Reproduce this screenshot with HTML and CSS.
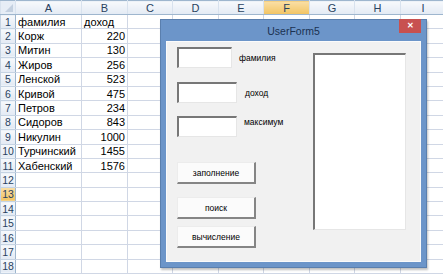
FILE: index.html
```
<!DOCTYPE html>
<html lang="ru">
<head>
	<meta charset="UTF-8">
	<title>UserForm5</title>
	<link rel="stylesheet" href="styles.css">
</head>
<body>
	<table class="sheet">
		<colgroup>
			<col class="c-head"><col class="c-a"><col class="c-wide"><col class="c-narrow"><col class="c-wide"><col class="c-narrow"><col class="c-wide"><col class="c-narrow"><col class="c-wide"><col class="c-narrow">
		</colgroup>
		<thead>
			<tr><th class="corner"></th><th>A</th><th>B</th><th>C</th><th>D</th><th>E</th><th class="cur">F</th><th>G</th><th>H</th><th>I</th></tr>
		</thead>
		<tbody>
			<tr><th>1</th><td>фамилия</td><td>доход</td><td></td><td></td><td></td><td></td><td></td><td></td><td></td></tr>
			<tr><th>2</th><td>Корж</td><td class="num">220</td><td></td><td></td><td></td><td></td><td></td><td></td><td></td></tr>
			<tr><th>3</th><td>Митин</td><td class="num">130</td><td></td><td></td><td></td><td></td><td></td><td></td><td></td></tr>
			<tr><th>4</th><td>Жиров</td><td class="num">256</td><td></td><td></td><td></td><td></td><td></td><td></td><td></td></tr>
			<tr><th>5</th><td>Ленской</td><td class="num">523</td><td></td><td></td><td></td><td></td><td></td><td></td><td></td></tr>
			<tr><th>6</th><td>Кривой</td><td class="num">475</td><td></td><td></td><td></td><td></td><td></td><td></td><td></td></tr>
			<tr><th>7</th><td>Петров</td><td class="num">234</td><td></td><td></td><td></td><td></td><td></td><td></td><td></td></tr>
			<tr><th>8</th><td>Сидоров</td><td class="num">843</td><td></td><td></td><td></td><td></td><td></td><td></td><td></td></tr>
			<tr><th>9</th><td>Никулин</td><td class="num">1000</td><td></td><td></td><td></td><td></td><td></td><td></td><td></td></tr>
			<tr><th>10</th><td>Турчинский</td><td class="num">1455</td><td></td><td></td><td></td><td></td><td></td><td></td><td></td></tr>
			<tr><th>11</th><td>Хабенский</td><td class="num">1576</td><td></td><td></td><td></td><td></td><td></td><td></td><td></td></tr>
			<tr><th>12</th><td></td><td></td><td></td><td></td><td></td><td></td><td></td><td></td><td></td></tr>
			<tr><th class="cur">13</th><td></td><td></td><td></td><td></td><td></td><td></td><td></td><td></td><td></td></tr>
			<tr><th>14</th><td></td><td></td><td></td><td></td><td></td><td></td><td></td><td></td><td></td></tr>
			<tr><th>15</th><td></td><td></td><td></td><td></td><td></td><td></td><td></td><td></td><td></td></tr>
			<tr><th>16</th><td></td><td></td><td></td><td></td><td></td><td></td><td></td><td></td><td></td></tr>
			<tr><th>17</th><td></td><td></td><td></td><td></td><td></td><td></td><td></td><td></td><td></td></tr>
			<tr><th>18</th><td></td><td></td><td></td><td></td><td></td><td></td><td></td><td></td><td></td></tr>
		</tbody>
	</table>

	<div class="form">
		<div class="title">
			UserForm5
			<a href="javascript:;" class="close">&#x2715;</a>
		</div>
		<div class="client">
			<div class="fields">
				<div class="field f1">
					<div class="textbox"></div>
					<span class="label">фамилия</span>
				</div>
				<div class="field f2">
					<div class="textbox"></div>
					<span class="label">доход</span>
				</div>
				<div class="field f3">
					<div class="textbox"></div>
					<span class="label">максимум</span>
				</div>
				<a href="javascript:;" class="btn b1">заполнение</a>
				<a href="javascript:;" class="btn b2">поиск</a>
				<a href="javascript:;" class="btn b3">вычисление</a>
			</div>
			<div class="listbox"></div>
		</div>
	</div>
</body>
</html>
```

FILE: styles.css
```
*{
	margin: 0;
	padding: 0;
}
body{
	width: 443px;
	height: 276px;
	overflow: hidden;
	position: relative;
	background: #fff;
	font-family: "Liberation Sans", Arial, sans-serif;
}
.sheet{
	border-collapse: collapse;
	table-layout: fixed;
	width: 445px;
}
.sheet .c-head{ width: 15px; }
.sheet .c-a{ width: 66px; }
.sheet .c-wide{ width: 46px; }
.sheet .c-narrow{ width: 45px; }
.sheet tr{
	height: 14.4px;
}
.sheet thead tr{
	height: 14px;
}
.sheet td,
.sheet th{
	border: 1px solid #d0d7e5;
	font-size: 11px;
	font-weight: normal;
	line-height: 12px;
	padding: 0 2px;
	white-space: nowrap;
	overflow: hidden;
	text-align: left;
	color: #000;
}
.sheet th{
	background: linear-gradient(#f7f9fc, #e3eaf4);
	border-color: #c5d3e3;
	color: #29425f;
	text-align: center;
	padding: 0;
}
.sheet thead th{
	border-color: #9eb6ce #d8e2ee #9eb6ce #d8e2ee;
}
.sheet tbody th{
	border-right-color: #9eb6ce;
	font-size: 10.5px;
}
.sheet th.cur{
	background: linear-gradient(#fadfa6, #f2c462);
	color: #29425f;
}
.sheet th.corner{
	position: relative;
	background: #e6edf6;
}
.sheet th.corner:after{
	content: "";
	position: absolute;
	right: 2px;
	bottom: 2px;
	border-left: 8px solid transparent;
	border-bottom: 8px solid #c3d0e0;
}
.sheet td.num{
	text-align: right;
}

/* окно формы */
.form{
	position: absolute;
	left: 160px;
	top: 19px;
	width: 267px;
	height: 249px;
	box-sizing: border-box;
	padding: 0 5px 5px;
	background: #6c95c9;
	border: 1px solid #5a7fae;
	box-shadow: 1px 2px 2px rgba(0,0,0,0.25);
}
.form .title{
	position: relative;
	height: 21px;
	line-height: 22px;
	text-align: center;
	font-size: 10.5px;
	color: #1b3251;
}
.form .close{
	position: absolute;
	right: 0;
	top: -1px;
	width: 22px;
	height: 14px;
	line-height: 14px;
	background: #c85150;
	color: #fff;
	font-size: 8px;
	font-weight: bold;
	text-decoration: none;
	text-align: center;
}
.client{
	display: flex;
	height: 221px;
	background: #f1f1f1;
	border: 1px solid #fbfbfb;
	box-sizing: border-box;
}
.fields{
	display: flex;
	flex-direction: column;
	align-items: flex-start;
	width: 136px;
	padding-left: 10px;
}
.field{
	display: flex;
	align-items: center;
}
.f1{ margin-top: 5px; }
.f2{ margin-top: 14px; }
.f3{
	margin-top: 13px;
	align-items: flex-start;
}
.textbox{
	width: 55px;
	height: 21px;
	box-sizing: border-box;
	background: #fff;
	border-style: solid;
	border-width: 2px 1px 1px 2px;
	border-color: #777 #e6e6e6 #e6e6e6 #777;
}
.f2 .textbox,
.f3 .textbox{
	width: 60px;
}
.label{
	font-size: 8.5px;
	color: #000;
	margin-left: 7px;
}
.f2 .label{
	margin-left: 8px;
}
.f3 .label{
	margin-top: 1px;
}
.btn{
	display: block;
	width: 79px;
	height: 22px;
	box-sizing: border-box;
	line-height: 20px;
	text-align: center;
	font-size: 8.5px;
	color: #000;
	text-decoration: none;
	background: #fbfbfb;
	border-style: solid;
	border-width: 1px 2px 2px 1px;
	border-color: #ececec #858585 #858585 #ececec;
}
.b1{ margin-top: 25px; }
.b2{ margin-top: 13px; }
.b3{ margin-top: 7px; }
.listbox{
	width: 93px;
	height: 177px;
	margin-top: 11px;
	box-sizing: border-box;
	background: #fff;
	border-style: solid;
	border-width: 2px 1px 1px 2px;
	border-color: #777 #e6e6e6 #e6e6e6 #777;
}
```
